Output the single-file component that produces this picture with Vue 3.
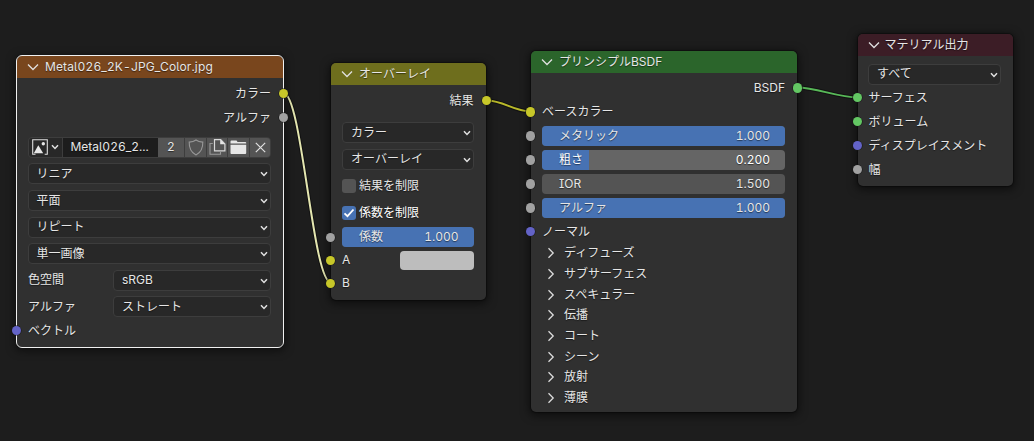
<script setup>
const modes = ['リニア', '平面', 'リピート', '単一画像'];

const imageSettings = [
  { label: '色空間', value: 'sRGB' },
  { label: 'アルファ', value: 'ストレート' },
];

const sliders = [
  { label: 'メタリック', value: '1.000', fill: 100 },
  { label: '粗さ', value: '0.200', fill: 19.3, hover: true },
  { label: 'IOR', value: '1.500', fill: 0 },
  { label: 'アルファ', value: '1.000', fill: 100 },
];

const panels = ['ディフューズ', 'サブサーフェス', 'スペキュラー', '伝播', 'コート', 'シーン', '放射', '薄膜'];

const outputs = [
  { label: 'サーフェス', type: 'shader' },
  { label: 'ボリューム', type: 'shader' },
  { label: 'ディスプレイスメント', type: 'vector' },
  { label: '幅', type: 'value' },
];

const links = [
  { d: 'M283.5 93C302 93 312.5 282.5 331 282.5', type: 'selected' },
  { d: 'M486.5 100.5C504 100.5 513 111.5 531 111.5', type: 'color' },
  { d: 'M797.5 87.5C816 87.5 838 97.5 857.5 97.5', type: 'shader' },
];
</script>

<template>
  <div class="editor">
    <svg class="links" width="1034" height="441" viewBox="0 0 1034 441">
      <g v-for="link in links" :key="link.d" fill="none">
        <path class="link-outline" :d="link.d" />
        <path class="link" :class="link.type" :d="link.d" />
      </g>
    </svg>

    <!-- image texture -->
    <section class="node image selected">
      <header class="title">
        <svg class="fold" viewBox="0 0 12 8"><path d="M1 1.5 6 6.5 11 1.5" /></svg>
        <span class="filename">Metal026_2K-JPG_Color.jpg</span>
      </header>
      <div class="body">
        <div class="row out"><span>カラー</span><i class="socket right color"></i></div>
        <div class="row out"><span>アルファ</span><i class="socket right value"></i></div>
        <div class="fields">
          <div class="row">
            <div class="datablock">
              <span class="cell browse">
                <svg width="16" height="16" viewBox="0 0 16 16">
                  <path d="M3.5 15.3H.7V.7h14.6v14.6h-2.600" fill="none" stroke="#ddd" stroke-width="1.1" />
                  <path d="M1.8 14.3 6.3 6.2l4.900 8.100z" fill="#e6e6e6" />
                  <circle cx="11.3" cy="4.7" r="1.700" fill="#e6e6e6" />
                </svg>
                <svg class="arrow" viewBox="0 0 8 6"><path d="M1 1.2 4 4.4 7 1.2" /></svg>
              </span>
              <span class="cell name">Metal026_2...</span>
              <span class="cell users">2</span>
              <span class="cell shield">
                <svg width="16" height="17" viewBox="0 0 16 17" fill="none" stroke="#989898" stroke-width="1.1">
                  <path d="M8 1C6 2.5 3.6 3 1.2 3.1 1 9.5 3.4 13.7 8 16c4.6-2.3 7-6.5 6.8-12.9C12.4 3 10 2.5 8 1z" />
                </svg>
              </span>
              <span class="cell copy">
                <svg width="17" height="16" viewBox="0 0 17 16" fill="none">
                  <path d="M3.8 4.5H1v10.8h10.5V13" stroke="#999" stroke-width="1.1" />
                  <path d="M5.5.7h6.200l4.200 4.200v7H5.500z" stroke="#d8d8d8" stroke-width="1.2" />
                  <path d="M11.2.5v4.800H16z" fill="#e6e6e6" />
                </svg>
              </span>
              <span class="cell open">
                <svg width="17" height="15" viewBox="0 0 17 15" fill="#e6e6e6">
                  <path d="M.5 3.6V1.500q0-.9.9-.9h4.800q.7 0 1 .8l.3.6h7.800q.9 0 .9.8v.8z" />
                  <path d="M.5 4.7h15.700v8.200q0 1-.9 1H1.400q-.9 0-.9-1z" />
                </svg>
              </span>
              <span class="cell unlink">
                <svg width="11" height="11" viewBox="0 0 11 11" stroke="#e0e0e0" stroke-width="1.2">
                  <path d="M.8.8l9.400 9.400M10.200.8.8 10.200" />
                </svg>
              </span>
            </div>
          </div>
          <div v-for="mode in modes" :key="mode" class="row">
            <div class="select">
              <span>{{ mode }}</span>
              <svg class="arrow" viewBox="0 0 8 6"><path d="M1 1.2 4 4.4 7 1.2" /></svg>
            </div>
          </div>
          <div v-for="item in imageSettings" :key="item.label" class="row split">
            <span class="label">{{ item.label }}</span>
            <div class="select">
              <span>{{ item.value }}</span>
              <svg class="arrow" viewBox="0 0 8 6"><path d="M1 1.2 4 4.4 7 1.2" /></svg>
            </div>
          </div>
        </div>
        <div class="row vector-in"><i class="socket left vector"></i><span>ベクトル</span></div>
      </div>
    </section>

    <!-- mix color -->
    <section class="node mix">
      <header class="title">
        <svg class="fold" viewBox="0 0 12 8"><path d="M1 1.5 6 6.5 11 1.5" /></svg>
        <span>オーバーレイ</span>
      </header>
      <div class="body">
        <div class="row out"><span>結果</span><i class="socket right color"></i></div>
        <div class="fields">
          <div v-for="name in ['カラー', 'オーバーレイ']" :key="name" class="row">
            <div class="select">
              <span>{{ name }}</span>
              <svg class="arrow" viewBox="0 0 8 6"><path d="M1 1.2 4 4.4 7 1.2" /></svg>
            </div>
          </div>
          <div class="row check"><i class="box"></i><span>結果を制限</span></div>
          <div class="row check on">
            <i class="box">
              <svg width="12" height="10" viewBox="0 0 12 10"><path d="M1.5 5.3 4.5 8.2 10.5 1.5" fill="none" stroke="#fff" stroke-width="1.8" /></svg>
            </i>
            <span>係数を制限</span>
          </div>
        </div>
        <div class="row">
          <i class="socket left value"></i>
          <div class="slider">
            <div class="fill" :style="{ width: '100%' }"></div>
            <span>係数</span><span>1.000</span>
          </div>
        </div>
        <div class="row"><i class="socket left color"></i><span>A</span><div class="swatch"></div></div>
        <div class="row"><i class="socket left color"></i><span>B</span></div>
      </div>
    </section>

    <!-- principled bsdf -->
    <section class="node bsdf">
      <header class="title">
        <svg class="fold" viewBox="0 0 12 8"><path d="M1 1.5 6 6.5 11 1.5" /></svg>
        <span>プリンシプルBSDF</span>
      </header>
      <div class="body">
        <div class="row out"><span>BSDF</span><i class="socket right shader"></i></div>
        <div class="row"><i class="socket left color"></i><span>ベースカラー</span></div>
        <div v-for="s in sliders" :key="s.label" class="row">
          <i class="socket left value"></i>
          <div class="slider" :class="{ hover: s.hover }">
            <div class="fill" :style="{ width: s.fill + '%' }"></div>
            <span>{{ s.label }}</span><span>{{ s.value }}</span>
          </div>
        </div>
        <div class="row normal"><i class="socket left vector"></i><span>ノーマル</span></div>
        <div v-for="panel in panels" :key="panel" class="panel">
          <svg width="8" height="12" viewBox="0 0 8 12"><path d="M1.5 1.3 6.2 6 1.5 10.7" fill="none" stroke="#dcdcdc" stroke-width="1.3" /></svg>
          <span>{{ panel }}</span>
        </div>
      </div>
    </section>

    <!-- material output -->
    <section class="node output">
      <header class="title">
        <svg class="fold" viewBox="0 0 12 8"><path d="M1 1.5 6 6.5 11 1.5" /></svg>
        <span>マテリアル出力</span>
      </header>
      <div class="body">
        <div class="row target">
          <div class="select">
            <span>すべて</span>
            <svg class="arrow" viewBox="0 0 8 6"><path d="M1 1.2 4 4.4 7 1.2" /></svg>
          </div>
        </div>
        <div v-for="o in outputs" :key="o.label" class="row">
          <i class="socket left" :class="o.type"></i><span>{{ o.label }}</span>
        </div>
      </div>
    </section>
  </div>
</template>

<style>
body {
  background: #1d1d1d;
}
</style>

<style scoped>
.editor {
  position: relative;
  width: 1034px;
  height: 441px;
  overflow: hidden;
  background: #1d1d1d;
  color: #e6e6e6;
  font: 12px/16px Inter, "Noto Sans CJK JP", sans-serif;
  font-feature-settings: "cv05", "cv08", "tnum";
  text-shadow: 0 1px 1px rgba(0, 0, 0, 0.5);
  white-space: nowrap;
}
.editor * {
  box-sizing: border-box;
}
.links {
  position: absolute;
  left: 0;
  top: 0;
}
.link-outline {
  stroke: #111;
  stroke-width: 4;
}
.link {
  stroke-width: 2;
}
.link.selected {
  stroke: #e4e6b0;
}
.link.color {
  stroke: #b9b92a;
}
.link.shader {
  stroke: #58b858;
}

.node {
  position: absolute;
  border-radius: 5px;
  background: #303030;
  box-shadow: 0 0 1px 1px rgba(0, 0, 0, 0.35), 0 2px 8px 2px rgba(0, 0, 0, 0.5);
}
.node.selected {
  outline: 1px solid #f0f0f0;
}
.image {
  left: 17px;
  top: 56px;
  width: 266px;
  height: 291px;
}
.mix {
  left: 331px;
  top: 63px;
  width: 155px;
  height: 237px;
}
.bsdf {
  left: 531px;
  top: 51px;
  width: 266px;
  height: 361px;
}
.output {
  left: 857.5px;
  top: 34px;
  width: 155.5px;
  height: 152px;
}

.title {
  display: flex;
  align-items: center;
  gap: 6px;
  height: 22px;
  padding-left: 10px;
  border-radius: 5px 5px 0 0;
}
.image .title {
  background: #79461d;
}
.mix .title {
  background: #6e6e1d;
}
.bsdf .title {
  background: #2b652b;
}
.output .title {
  gap: 5px;
  background: #3c1d26;
}
.filename {
  letter-spacing: 0.14px;
}
.fold {
  width: 12px;
  height: 8px;
}
.fold path {
  fill: none;
  stroke: #e0e0e0;
  stroke-width: 1.3;
}
.arrow {
  width: 8px;
  height: 6px;
}
.arrow path {
  fill: none;
  stroke: #e0e0e0;
  stroke-width: 1.5;
}

.row {
  position: relative;
  display: flex;
  align-items: center;
  height: 24px;
  padding: 0 12px 0 11px;
}
.row.out {
  justify-content: flex-end;
}
.socket {
  position: absolute;
  top: 50%;
  width: 9.4px;
  height: 9.4px;
  margin-top: -4.7px;
  border-radius: 50%;
  box-shadow: 0 0 0 0.6px #1a1a1a;
}
.socket.left {
  left: -5px;
}
.socket.right {
  right: -5px;
}
.socket.color {
  background: #c7c729;
}
.socket.value {
  background: #a1a1a1;
}
.socket.vector {
  background: #6363c7;
}
.socket.shader {
  background: #63c763;
}

.fields .row {
  height: 26.6px;
}
.select {
  display: flex;
  flex: 1;
  align-items: center;
  justify-content: space-between;
  height: 21px;
  padding: 0 2px 0 8px;
  border: 1px solid #3d3d3d;
  border-radius: 4px;
  background: #282828;
}
.select .arrow {
  margin-top: 1px;
}
.split .label {
  width: 85px;
}

.image .body {
  padding-top: 3.6px;
}
.image .fields {
  padding-top: 4.5px;
}
.image .fields .row {
  padding-left: 10.5px;
}
.image .fields .split {
  padding-left: 11px;
}
.vector-in {
  height: 21px;
}
.datablock {
  display: flex;
  flex: 1;
  height: 21px;
  border: 1px solid #3d3d3d;
  border-radius: 4px;
  background: #3d3d3d;
  overflow: hidden;
}
.cell {
  display: flex;
  align-items: center;
  justify-content: center;
  margin-right: 1px;
  background: #545454;
}
.browse {
  width: 33px;
  gap: 3px;
  background: #282828;
}
.name {
  flex: 1;
  justify-content: flex-start;
  margin-right: 0;
  padding-left: 8px;
  background: #1d1d1d;
}
.users {
  width: 26px;
}
.shield {
  width: 21px;
}
.copy {
  width: 20px;
}
.open {
  width: 21px;
}
.unlink {
  width: 20px;
  margin-right: 0;
}

.mix .body {
  padding-top: 4px;
}
.mix .fields {
  padding: 7.5px 0 0;
}
.mix .body > .row {
  height: 23px;
}
.check {
  gap: 3px;
}
.check .box {
  display: flex;
  align-items: center;
  justify-content: center;
  width: 14px;
  height: 14px;
  border-radius: 3px;
  background: #545454;
}
.check.on .box {
  background: #4772b3;
}
.check.on {
  color: #fff;
}
.swatch {
  width: 74px;
  height: 19px;
  margin-left: auto;
  border-radius: 4px;
  background: #bdbdbd;
}
.mix .row {
  padding-right: 12.5px;
}
.slider {
  position: relative;
  display: flex;
  flex: 1;
  align-items: center;
  justify-content: space-between;
  height: 20px;
  padding: 0 15px 0 17px;
  border-radius: 4px;
  background: #545454;
  overflow: hidden;
}
.slider.hover {
  background: #656565;
  color: #fff;
}
/* value bar sits beneath the slider's text */
.slider .fill {
  position: absolute;
  left: 0;
  top: 0;
  bottom: 0;
  background: #4772b3;
}
.slider span {
  position: relative;
}

.bsdf .body {
  padding-top: 3px;
}
.bsdf .normal {
  height: 23px;
}
.panel {
  display: flex;
  align-items: center;
  gap: 9px;
  height: 20.7px;
  padding-left: 16px;
}
.output .body {
  padding-top: 0.5px;
}
.output .target {
  height: 29px;
  padding: 6px 12.5px 0 10.5px;
}
</style>
